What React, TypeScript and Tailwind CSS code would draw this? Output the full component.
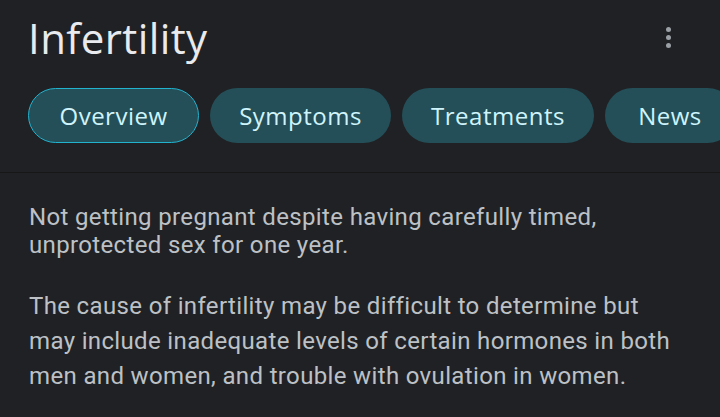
import React from 'react';

const tabs = [
  { label: 'Overview', width: 'w-[171px]', active: true },
  { label: 'Symptoms', width: 'w-[181px]', active: false },
  { label: 'Treatments', width: 'w-[192px]', active: false },
  { label: 'News', width: 'w-[130px]', active: false },
];

const MoreButton: React.FC = () => (
  <button className="flex flex-col items-center gap-[3px] w-6 h-8 justify-center" title="More options">
    <span className="w-[5px] h-[5px] rounded-full bg-[#9aa0a6]" />
    <span className="w-[5px] h-[5px] rounded-full bg-[#9aa0a6]" />
    <span className="w-[5px] h-[5px] rounded-full bg-[#9aa0a6]" />
  </button>
);

export default function App() {
  return (
    <div className="w-[720px] h-[417px] bg-[#202124] overflow-hidden font-['Roboto',sans-serif]">
      <div className="flex items-start justify-between pl-[28px] pr-[40px] pt-[10px]">
        <h1 className="text-[42px] leading-[56px] text-[#e8eaed] font-['Open_Sans',sans-serif] tracking-[0.4px]">
          Infertility
        </h1>
        <div className="pt-[11px]">
          <MoreButton />
        </div>
      </div>

      <div className="flex gap-[11px] pl-[28px] pt-[22px] pb-[29px] overflow-hidden border-b border-[#171717]">
        {tabs.map(t => (
          <button
            key={t.label}
            className={`${t.width} shrink-0 h-[55px] rounded-full flex items-center justify-center bg-[#244f58] text-[#cff4fb] text-[24px] tracking-[0.5px] font-['Open_Sans',sans-serif] ${t.active ? 'border border-[#22b3cf]' : ''}`}
          >
            {t.label}
          </button>
        ))}
      </div>

      <div className="pl-[29px] pr-[20px] pt-[30px] text-[#bdc1c6] text-[24px] tracking-[0.35px]">
        <p className="leading-[28px]">
          Not getting pregnant despite having carefully timed,
          <br />
          unprotected sex for one year.
        </p>
        <p className="leading-[35px] mt-[30px]">
          The cause of infertility may be difficult to determine but
          <br />
          may include inadequate levels of certain hormones in both
          <br />
          men and women, and trouble with ovulation in women.
        </p>
      </div>
    </div>
  );
}
